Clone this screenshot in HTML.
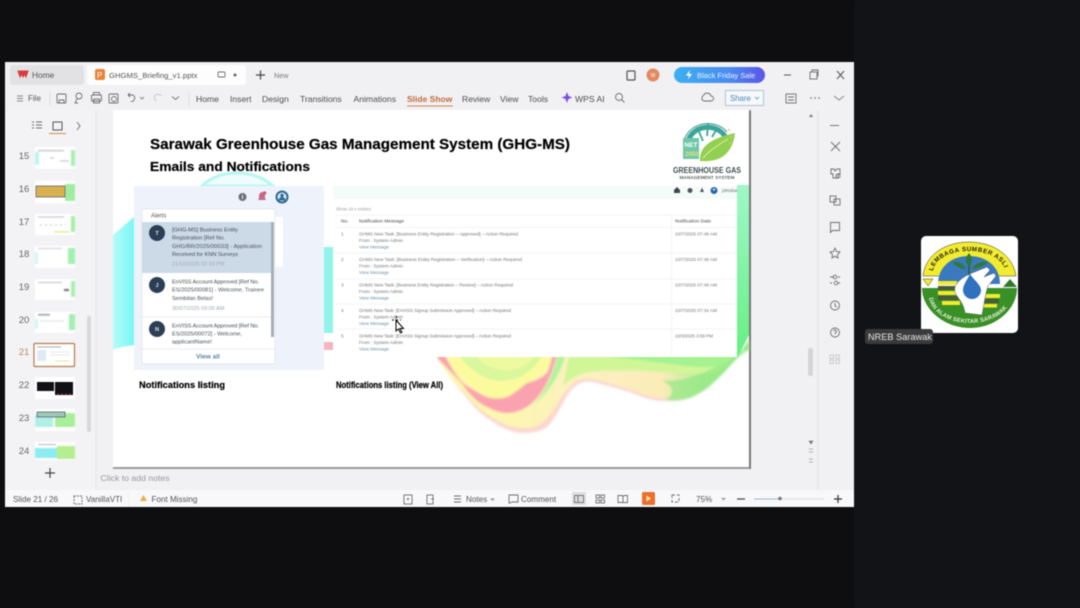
<!DOCTYPE html>
<html><head><meta charset="utf-8"><title>GHGMS Briefing</title>
<style>
html,body{margin:0;padding:0;width:1080px;height:608px;overflow:hidden;background:#0e0e10}
svg{display:block;filter:blur(.45px);font-family:"Liberation Sans",sans-serif}
.m{font-size:8.400px;fill:#555}
.n{font-size:9.500px;fill:#666;text-anchor:middle}
.i{fill:none;stroke:#6d6d6d;stroke-width:.9}
.t{font-size:4.700px;fill:#777}
.l{font-size:4.700px;fill:#6f8fa8}
.a{font-size:5.700px;fill:#4a4f58}
.d{font-size:5.500px;fill:#a5a8ad}
.b{font-weight:bold;fill:#000;stroke:#000;stroke-width:.2}
</style></head><body>
<svg width="1080" height="608" viewBox="0 0 1080 608" xmlns="http://www.w3.org/2000/svg">
<defs>
<linearGradient id="bf" x1="0" x2="1"><stop offset="0" stop-color="#3db0f0"/><stop offset=".6" stop-color="#4a8cf0"/><stop offset="1" stop-color="#5b55e8"/></linearGradient>
<linearGradient id="g1" x1="0" x2="0" y1="0" y2="1"><stop offset="0" stop-color="#a0f7c8"/><stop offset="1" stop-color="#65ef82"/></linearGradient>
<linearGradient id="peach" x1="0" x2="1"><stop offset="0" stop-color="#fbfba6"/><stop offset=".5" stop-color="#fdf0c0"/><stop offset=".72" stop-color="#fbecb8"/><stop offset=".85" stop-color="#b4ec98"/><stop offset="1" stop-color="#82ee84"/></linearGradient>
<linearGradient id="cy" x1="0" x2="1"><stop offset="0" stop-color="#b6fbf8"/><stop offset="1" stop-color="#78f8f5"/></linearGradient>
<filter id="s1" x="-5%" y="-5%" width="110%" height="110%"><feGaussianBlur stdDeviation="1"/></filter>
<filter id="s2" x="-5%" y="-5%" width="110%" height="110%"><feGaussianBlur stdDeviation=".6"/></filter>
</defs>
<rect width="1080" height="608" fill="#0e0e10"/>
<rect x="854" width="226" height="608" fill="#111317"/>
<rect x="5" y="62" width="849" height="445" fill="#f1f1f4"/>
<rect x="10" y="65" width="74" height="20" rx="3" fill="#e2e2e5"/>
<rect x="87" y="65" width="159" height="20" rx="3" fill="#fdfdfd"/>
<path d="M18 71h10l-2 6-1.500-3-1.500 3-1.500-3-1.500 3z" fill="#d93b3b" stroke="#d93b3b"/>
<text x="32" y="78" class="m">Home</text>
<rect x="95" y="69" width="10" height="11" rx="2" fill="#e8843a"/><text x="97" y="78" font-size="8" fill="#fff">P</text>
<text x="109" y="78" font-size="7.700" fill="#555">GHGMS_Briefing_v1.pptx</text>
<rect x="218" y="72" width="7" height="5" rx="1" class="i"/><circle cx="235" cy="75" r="1.500" fill="#666"/>
<path d="M256 75h9M260.500 70.500v9" stroke="#444" stroke-width="1.200"/>
<text x="274" y="78" font-size="7.200" fill="#777">New</text>
<rect x="627" y="71" width="8" height="9" rx="1" fill="none" stroke="#555" stroke-width="1.200"/>
<circle cx="653" cy="75" r="6.500" fill="#e18b5f"/><text x="653" y="77" font-size="5" fill="#fff" text-anchor="middle">W</text>
<rect x="674" y="67" width="91" height="16" rx="8" fill="url(#bf)"/>
<path d="M690 70l-4 5.500h3l-1 4 4-5.500h-3z" fill="#fff"/>
<text x="697" y="78" font-size="7.500" fill="#e9f2ff">Black Friday Sale</text>
<path d="M784 75h7" stroke="#555"/><rect x="810" y="72" width="7" height="7" class="i"/><path d="M812 72v-2h6v6h-1" class="i"/>
<path d="M837 71l7 8M844 71l-7 8" stroke="#555"/>
<!-- toolbar -->
<path d="M17 96h6M17 98.500h6M17 101h6" stroke="#888"/>
<text x="28" y="101" font-size="8" fill="#555">File</text>
<path d="M50 92v14" stroke="#ddd"/>
<rect x="57" y="94" width="9" height="9" rx="1" class="i"/><path d="M59 100h5v3h-5z" class="i"/>
<circle cx="79" cy="96" r="3" class="i"/><path d="M77 99l-2 4h3" class="i"/>
<rect x="91.500" y="95" width="10" height="6" rx="1" class="i"/><rect x="93.500" y="92.500" width="6" height="2.500" class="i"/><rect x="93.500" y="99" width="6" height="4" class="i"/>
<rect x="109" y="94" width="9" height="9" rx="1" class="i"/><circle cx="114" cy="99" r="2.500" class="i"/>
<path d="M128 95h5a3.500 3.500 0 0 1-2 6.500M128 95l2-2M128 95l2 2" class="i"/><path d="M140 97l2 2 2-2" fill="none" stroke="#888"/>
<path d="M161 96a3.500 3.500 0 1 0-4 5" fill="none" stroke="#ccc"/><path d="M172 96.500l3.500 3 3.500-3" fill="none" stroke="#777"/>
<path d="M189 92v14" stroke="#ddd"/>
<g font-size="8.600" fill="#4d4d4d">
<text x="196" y="102">Home</text>
<text x="230" y="102">Insert</text>
<text x="262" y="102">Design</text>
<text x="300" y="102">Transitions</text>
<text x="353.500" y="102">Animations</text>
<text x="407" y="102" font-weight="bold" fill="#c06a3a" font-size="8.500">Slide Show</text>
<text x="462" y="102">Review</text>
<text x="500" y="102">View</text>
<text x="528" y="102">Tools</text>
<text x="575" y="102">WPS AI</text>
</g>
<rect x="407" y="105.500" width="46" height="1" fill="#d4844d"/>
<path d="M567 92l1.500 4 4 1.500-4 1.500-1.500 4-1.500-4-4-1.500 4-1.500z" fill="#7d4fe0"/>
<circle cx="619" cy="97" r="3.500" class="i"/><path d="M621.500 99.500l3 3" class="i"/>
<path d="M704 101h7a2.500 2.500 0 0 0 0-5 4 4 0 0 0-7.500-.5 3 3 0 0 0 .5 5.500z" class="i"/>
<rect x="725.500" y="90.500" width="38" height="15" fill="#f7f8fb" stroke="#a8c4d8"/>
<text x="730" y="101" font-size="7.800" fill="#4a86b8">Share</text><path d="M755 97l2 2 2-2" fill="none" stroke="#4a86b8" stroke-width=".7"/>
<rect x="786" y="94" width="10" height="9" class="i"/><path d="M788 97h6M788 100h6" class="i"/>
<circle cx="811" cy="98" r=".7" fill="#555"/><circle cx="815" cy="98" r=".7" fill="#555"/><circle cx="819" cy="98" r=".7" fill="#555"/>
<path d="M834 96l5 4 5-4" fill="none" stroke="#888"/>
<!-- areas -->
<rect x="5" y="110" width="91" height="380" fill="#f3f3f6"/>
<path d="M96 110v380" stroke="#e5e5e8"/>
<path d="M818 110v380" stroke="#e2e2e6"/>
<rect x="5" y="490" width="849" height="17" fill="#f8f8fb"/>
<!-- thumbs panel -->
<path d="M32 122h2M36 122h6M32 125h2M36 125h6M32 128h2M36 128h6" class="i"/>
<rect x="53" y="122" width="9" height="8" fill="none" stroke="#555"/>
<rect x="49" y="133" width="17" height="1" fill="#d9824c"/>
<path d="M77 122l3 4-3 4" fill="none" stroke="#777"/>
<g class="n"><text x="24" y="159">15</text><text x="24" y="192">16</text><text x="24" y="225">17</text><text x="24" y="257">18</text><text x="24" y="290">19</text><text x="24" y="323">20</text><text x="24" y="355" style="fill:#b8885f">21</text><text x="24" y="388">22</text><text x="24" y="421">23</text><text x="24" y="454">24</text></g>
<g>
<rect x="35" y="147" width="40" height="22" fill="#fff"/><g filter="url(#s2)"><rect x="35" y="152" width="4" height="13" fill="#bdf5f0"/><rect x="71" y="150" width="4" height="16" fill="#a8efb4"/><rect x="38" y="150" width="26" height="1.200" fill="#bbb"/><path d="M50 158h4M60 161h9" stroke="#bbb"/></g>
<rect x="35" y="181" width="40" height="22" fill="#fff"/><rect x="65" y="184" width="10" height="17" fill="#a0eca0" filter="url(#s2)"/><rect x="36" y="186" width="29" height="11" fill="#d8b04e" stroke="#667" stroke-width=".8"/>
<rect x="35" y="214" width="40" height="21" fill="#fff"/><g filter="url(#s2)"><rect x="71" y="216" width="4" height="16" fill="#a4efa4"/><path d="M38 217h26" stroke="#bbb"/><path d="M40 225h26" stroke="#bbb" stroke-dasharray="2 3"/><path d="M54 232h15" stroke="#eeeba8" stroke-width="2"/></g>
<rect x="35" y="246" width="40" height="22" fill="#fff"/><g filter="url(#s2)"><rect x="68" y="248" width="7" height="16" fill="#a0f0b0"/><rect x="35" y="252" width="3" height="12" fill="#d0f7f3"/><rect x="38" y="248" width="24" height="1" fill="#ccc"/></g>
<rect x="35" y="279" width="40" height="21" fill="#fff"/><g filter="url(#s2)"><rect x="71" y="281" width="4" height="16" fill="#a8efb0"/><rect x="64" y="289" width="5" height="2" fill="#667"/><rect x="38" y="282" width="24" height="1" fill="#bbb"/></g>
<rect x="35" y="312" width="40" height="21" fill="#fff"/><g filter="url(#s2)"><rect x="69" y="314" width="6" height="16" fill="#a4eeb0"/><rect x="38" y="314" width="12" height="1.500" fill="#999"/><rect x="35" y="319" width="3" height="10" fill="#d0f7f3"/><path d="M40 321h24" stroke="#ddd"/></g>
<rect x="34" y="343.500" width="40.500" height="23" rx="1" fill="#fff" stroke="#b87a4a" stroke-width="1.200"/><rect x="37" y="350" width="9" height="11" fill="#dfeaf5"/><path d="M37 347h24" stroke="#aaa"/><path d="M50 352h20M50 355h20" stroke="#e8e8e8"/><path d="M55 361h14" stroke="#e8e58a"/>
<rect x="35" y="377" width="40" height="22" fill="#fff"/><rect x="37" y="382" width="17" height="9" fill="#101015"/><rect x="55" y="382" width="18" height="13" fill="#101015"/><path d="M57 394h14" stroke="#a34" stroke-dasharray="2 2"/>
<rect x="35" y="409" width="40" height="22" fill="#fff"/><g filter="url(#s2)"><rect x="35" y="415" width="18" height="12" fill="#b0efe6"/><rect x="55" y="413" width="20" height="14" fill="#a8f098"/></g><rect x="37" y="412" width="28" height="5" fill="#a0c8b4" stroke="#567" stroke-width=".8"/>
<rect x="35" y="442" width="40" height="18" fill="#fff"/><g filter="url(#s2)"><rect x="35" y="448" width="22" height="10" fill="#8decef"/><rect x="57" y="446" width="18" height="13" fill="#b4ee90"/></g><rect x="38" y="444" width="18" height="1" fill="#bbb"/>
</g>
<rect x="87" y="316" width="4" height="116" rx="2" fill="#d8d8db"/>
<path d="M45 473h10M50 468v10" stroke="#444" stroke-width="1.200"/>
<!-- slide -->
<rect x="113" y="110" width="638" height="359" fill="#9a9a9a"/>
<rect x="749" y="111" width="2" height="358" fill="#777"/>
<rect x="113" y="110" width="636" height="357" fill="#fff"/>
<path d="M113 235L134 217V345L122 347Q116 348 113 350Z" fill="url(#cy)"/>
<path d="M202 186C212 176 225 173 237 173S262 176 273 186Z" fill="#eefcfb" stroke="#b5f7f2" stroke-width="3"/>
<!-- wave -->
<g filter="url(#s1)">
<path d="M437 358C447 372 455 385 463 393 472 405 480 414 490 420 502 428 512 433 523 433 534 433 542 431 547 427 554 420 558 412 563 403 568 394 572 388 577 385 584 381 590 381 597 383L630 392C642 397 652 401 663 401 673 401 682 401 690 398 698 394 706 390 713 383 722 375 730 366 737 358L749 340V350H437Z" fill="#fbd8d0"/>
<path d="M437 358C447 372 455 385 463 391 472 402 480 410 490 416 502 424 512 428 523 428 534 428 541 425 545 420 552 414 556 406 561 398 566 390 571 384 577 381 584 378 590 378 597 380L630 389C642 394 652 398 663 398 673 398 682 400 690 397 698 394 706 390 713 383 722 375 730 366 737 358L749 340V350H437Z" fill="url(#peach)"/>
<path d="M445 350C455 372 470 385 487 397 495 402 502 400 507 397 518 390 527 384 535 378 545 372 552 365 556 350Z" fill="#fbfb9e"/>
<path d="M455 350C470 372 485 380 500 381 518 381 535 372 545 350Z" fill="#d9f79c"/>
<path d="M470 350C485 368 500 372 512 370 525 367 532 362 536 350Z" fill="#eefaa0"/>
<path d="M437 358C447 368 455 376 463 385 470 396 480 404 487 407 495 411 501 413 507 413 515 413 522 410 527 407 534 402 539 396 543 390 550 378 554 368 558 350L553 350C551 364 549 369 547 373 542 378 535 381 527 383 520 388 514 394 507 397 500 399 493 399 487 397 478 393 470 388 463 383 456 375 450 367 443 350Z" fill="#fba2b0"/>
<path d="M558 350L567 350C563 366 558 375 553 383 547 392 540 400 533 405 540 398 545 389 549 381 553 372 556 364 558 350Z" fill="#aef59c"/>
<path d="M570 350H737C728 366 720 373 712 373 696 376 680 372 660 372 640 370 610 370 590 372 580 374 570 378 563 386 565 376 567 366 570 350Z" fill="#d0f698"/>
<path d="M590 350H737C730 363 722 367 712 367 690 368 660 362 640 360 620 358 605 358 590 350Z" fill="#a4f290"/>
<path d="M660 380C680 383 700 375 715 367L737 357L749 340V350L737 358C730 366 722 375 713 383 705 391 697 395 690 398 680 401 672 401 665 400 675 395 675 385 660 380Z" fill="#93e885" opacity=".7"/>
</g>
<path d="M737 185H749V335L737 358Z" fill="url(#g1)"/>
<rect x="324" y="247" width="9" height="86" fill="#92f3ea"/>
<rect x="324" y="342" width="9" height="8" fill="#f5b5c0"/>
<!-- titles -->
<text x="150" y="149" font-size="14.600" class="b" textLength="420" lengthAdjust="spacingAndGlyphs">Sarawak Greenhouse Gas Management System (GHG-MS)</text>
<text x="150" y="171" font-size="13" class="b" textLength="160" lengthAdjust="spacingAndGlyphs">Emails and Notifications</text>
<!-- logo -->
<path d="M688 142a20 18 0 0 1 38-4" fill="none" stroke="#3aa59a" stroke-width="5"/>
<path d="M684 142a24 21 0 0 1 43-10" fill="none" stroke="#2f8f8a" stroke-width="1"/>
<path d="M697 127l6 14M708 124l-1 12M718 127l-6 10" stroke="#3aa59a" stroke-width="1.800"/>
<rect x="683" y="138" width="16" height="21" fill="#6fc7a8"/>
<text x="684.500" y="147" font-size="6.500" font-weight="bold" fill="#fff">NET</text>
<text x="685" y="156" font-size="6" font-weight="bold" fill="#e8e57a">2050</text>
<path d="M700 161C699 146 712 138 735 133 733 150 724 163 700 161Z" fill="#93cf50"/>
<path d="M703 158C710 150 718 145 728 139" stroke="#dff0a8" fill="none"/>
<g fill="#c9c7a0"><circle cx="729" cy="130" r="1"/><circle cx="731" cy="137" r="1"/><circle cx="730" cy="143" r="1"/></g>
<text x="707" y="173" font-size="8" font-weight="bold" fill="#3d4f50" text-anchor="middle" textLength="68" lengthAdjust="spacingAndGlyphs">GREENHOUSE GAS</text>
<text x="707" y="179" font-size="4.800" font-weight="bold" fill="#5a6666" text-anchor="middle" textLength="55" lengthAdjust="spacingAndGlyphs">MANAGEMENT SYSTEM</text>
<!-- left screenshot -->
<rect x="134" y="186" width="190" height="184" fill="#eef3fb"/>
<circle cx="242.500" cy="197" r="4" fill="#6b7079"/><rect x="242" y="195" width="1" height="4" fill="#eef3fb"/>
<path d="M262 192c-3 1-3 3-3 6l-1 2h8l-1-2c0-3 0-5-3-6z" fill="#c46a8a"/><circle cx="264.500" cy="193" r="1.800" fill="#d45a6a"/>
<circle cx="282" cy="197" r="6.500" fill="#2d6a94"/><circle cx="282" cy="197" r="4.500" fill="#dfe8f2"/><circle cx="282" cy="195.500" r="1.700" fill="#2d6a94"/><path d="M278.500 200.500a3.500 3.500 0 0 1 7 0" fill="#2d6a94"/>
<rect x="142" y="217" width="141" height="50" fill="#fff"/>
<rect x="142" y="209" width="133" height="155" rx="2" fill="#fff" stroke="#dde2e8" stroke-width=".7"/>
<text x="151" y="217.500" font-size="6" fill="#555">Alerts</text>
<rect x="142" y="222" width="130" height="51" fill="#ccdae8"/>
<path d="M142 317h133M142 349h133" stroke="#e3e6ea" stroke-width=".7"/>
<rect x="271" y="222" width="3" height="115" fill="#a6afb8"/>
<g fill="#2c3e55"><circle cx="157" cy="233" r="8"/><circle cx="157" cy="285" r="8"/><circle cx="157" cy="329" r="8"/></g>
<g font-size="5.500" font-weight="bold" fill="#dfe5ee" text-anchor="middle"><text x="157" y="235">T</text><text x="157" y="287">J</text><text x="157" y="331">N</text></g>
<g class="a">
<text x="172" y="231.500" textLength="66">[GHG-MS] Business Entity</text>
<text x="172" y="239.500" textLength="53">Registration [Ref No.</text>
<text x="172" y="248" textLength="90">GHG/BR/2025/00033] - Application</text>
<text x="172" y="256" textLength="66">Received for KNN Surveys</text>
<text x="172" y="283.500" textLength="87">EnVISS Account Approved [Ref No.</text>
<text x="172" y="291.500" textLength="92">ES/2025/00081] - Welcome, Trainee</text>
<text x="172" y="300" textLength="41">Sembilan Belas!</text>
<text x="172" y="327.500" textLength="87">EnVISS Account Approved [Ref No.</text>
<text x="172" y="335.500" textLength="70">ES/2025/00072] - Welcome,</text>
<text x="172" y="343.500" textLength="40">applicantName!</text>
</g>
<g class="d"><text x="172" y="265.500">21/10/2025 02:19 PM</text><text x="172" y="310">30/07/2025 09:09 AM</text></g>
<text x="208" y="358.500" font-size="6.500" font-weight="bold" fill="#5a87a8" text-anchor="middle">View all</text>
<text x="139" y="388" font-size="9" class="b" textLength="86" lengthAdjust="spacingAndGlyphs">Notifications listing</text>
<!-- right screenshot -->
<rect x="333" y="186" width="404" height="171" fill="#fff"/>
<rect x="333" y="186" width="404" height="13" fill="#f5fbf9"/>
<path d="M674 190l3-3 3 3v3h-6z" fill="#3d4550"/><circle cx="690" cy="190.500" r="2.500" fill="#4f5660"/><path d="M702 187.500l2 4.500h-4z" fill="#4f5660"/>
<circle cx="714" cy="190.500" r="3.500" fill="#2767a8"/><circle cx="714" cy="189.500" r="1.200" fill="#cde"/>
<text x="722" y="192" font-size="4.400" fill="#666">johndoe</text>
<text x="336" y="210.500" font-size="4.400" fill="#999">Show  10  v  entries</text>
<path d="M336 215h401M336 227.500h401M336 253h401M336 279h401M336 304h401M336 329h401" stroke="#eef0f2" stroke-width=".7"/>
<path d="M671.500 215v140" stroke="#eef0f2" stroke-width=".7"/>
<g font-size="4.800" fill="#444"><text x="341" y="222.500">No.</text><text x="359" y="222.500" textLength="45">Notification Message</text><text x="675" y="222.500" textLength="36">Notification Date</text></g>
<g class="t">
<text x="341" y="235.500">1</text><text x="341" y="261">2</text><text x="341" y="286.500">3</text><text x="341" y="312">4</text><text x="341" y="337.500">5</text>
<text x="359" y="235.500" textLength="159">GHMS New Task: [Business Entity Registration – Approved] – Action Required</text>
<text x="359" y="242" textLength="44">From : System Admin</text>
<text x="359" y="261" textLength="163">GHMS New Task: [Business Entity Registration – Verification] – Action Required</text>
<text x="359" y="267.500" textLength="44">From : System Admin</text>
<text x="359" y="286.500" textLength="154">GHMS New Task: [Business Entity Registration – Review] – Action Required</text>
<text x="359" y="293" textLength="44">From : System Admin</text>
<text x="359" y="312" textLength="152">GHMS New Task: [EnVISS Signup Submission Approved] – Action Required</text>
<text x="359" y="318.500" textLength="44">From : System Admin</text>
<text x="359" y="337.500" textLength="152">GHMS New Task: [EnVISS Signup Submission Approved] – Action Required</text>
<text x="359" y="344" textLength="44">From : System Admin</text>
<text x="675" y="235.500" textLength="42">10/7/2025 07:49 AM</text>
<text x="675" y="261" textLength="42">10/7/2025 07:49 AM</text>
<text x="675" y="286.500" textLength="42">10/7/2025 07:49 AM</text>
<text x="675" y="312" textLength="42">10/7/2025 07:34 AM</text>
<text x="675" y="337.500" textLength="38">10/3/2025 3:59 PM</text>
</g>
<g class="l"><text x="359" y="248.500" textLength="30">View Message</text><text x="359" y="274" textLength="30">View Message</text><text x="359" y="299.500" textLength="30">View Message</text><text x="359" y="325" textLength="30">View Message</text><text x="359" y="350.500" textLength="30">View Message</text></g>
<path d="M396 320v11l2.500-2 2 4 1.500-.8-2-3.700h3.500z" fill="#fff" stroke="#000" stroke-width="1"/>
<path d="M392 320h9M396.500 316v8" stroke="#000" stroke-width="1" stroke-dasharray="2 2"/>
<text x="336" y="388" font-size="8.900" class="b" textLength="107" lengthAdjust="spacingAndGlyphs">Notifications listing (View All)</text>
<!-- scroll right of slide -->
<path d="M811 114l-2 3h4z" fill="#777"/>
<rect x="808" y="348" width="5" height="28" rx="2" fill="#d5d5d8"/>
<path d="M809 441h4l-2 3zM809 449h4M809 452h4M809 459h4M809 462h4" fill="#777" stroke="#777" stroke-width=".6"/>
<!-- right sidebar -->
<path d="M830 125.500h9" stroke="#777"/>
<g class="i">
<path d="M831 142l9 9M840 142l-9 9"/>
<path d="M831 169h3l1 2 2-2h3v5h-2v4h-5v-4h-2z"/><circle cx="838" cy="176" r="2"/>
<rect x="830" y="196" width="6" height="6"/><rect x="834" y="199" width="6" height="6"/>
<path d="M830.500 222.500h9v8h-7l-2 2z"/>
<path d="M835 248l1.500 3.500 3.500.5-2.500 2.500.5 3.500-3-1.800-3 1.800.5-3.500-2.500-2.500 3.500-.5z"/>
<path d="M830 277h4M838 277h2M830 283h2M838 283h2"/><circle cx="835" cy="277" r="1.800"/><circle cx="836" cy="283" r="1.800"/>
<circle cx="835" cy="305.500" r="4.500"/><path d="M835 303v3l2 1"/>
<circle cx="835" cy="332.500" r="4.500"/><path d="M833.500 331a1.500 1.500 0 1 1 1.500 2v1"/>
</g>
<g fill="none" stroke="#ccc"><rect x="830" y="355" width="3.500" height="3.500"/><rect x="836" y="355" width="3.500" height="3.500"/><rect x="830" y="360" width="3.500" height="3.500"/><rect x="836" y="360" width="3.500" height="3.500"/></g>
<!-- notes -->
<text x="100.500" y="481" font-size="8.700" fill="#999">Click to add notes</text>
<!-- status -->
<g font-size="8.100" fill="#555">
<text x="13" y="502">Slide 21 / 26</text>
<text x="86" y="502">VanillaVTI</text>
<text x="151.500" y="502">Font Missing</text>
<text x="466" y="502">Notes</text>
<text x="521" y="502">Comment</text>
<text x="696" y="502">75%</text>
</g>
<path d="M74 496h8v8h-8z" class="i" stroke-dasharray="2 1"/>
<path d="M129 493v14" stroke="#eee"/>
<path d="M143.500 495l3.500 6h-7z" fill="#e8b04a"/>
<rect x="404" y="495" width="8" height="9" class="i"/><circle cx="408" cy="499" r="1" fill="#666"/>
<rect x="427" y="495" width="6" height="9" class="i"/><path d="M431 499h3" class="i"/>
<path d="M454 496h7M454 499h7M454 502h7" class="i"/><path d="M491 498.500l1.500 1.500 1.500-1.500" fill="none" stroke="#777"/>
<path d="M509 495h9v7h-6l-2 1h-1z" class="i"/>
<rect x="572" y="492" width="14" height="13" fill="#dfdfe2"/>
<rect x="574.500" y="495.500" width="9" height="7" class="i"/><path d="M578 495.500v7" class="i"/>
<rect x="596" y="495" width="3.500" height="3" class="i"/><rect x="601" y="495" width="3.500" height="3" class="i"/><rect x="596" y="500" width="3.500" height="3" class="i"/><rect x="601" y="500" width="3.500" height="3" class="i"/>
<path d="M618 495.500h4l1 1 1-1h3.500v7h-9.500zM623 496.500v6" class="i"/>
<rect x="642" y="492" width="13" height="13" rx="1.500" fill="#e8712d"/><path d="M646.500 495.500l4.500 3-4.500 3z" fill="#ffe9a0"/>
<rect x="672" y="495" width="7" height="7" class="i" stroke-dasharray="3 2"/>
<path d="M722 498l1.500 1.500 1.500-1.500" fill="none" stroke="#777"/>
<path d="M737 499h8" stroke="#444" stroke-width="1.200"/>
<path d="M754 499h70" stroke="#ddd"/><path d="M754 499h26" stroke="#9db6cf"/><circle cx="780" cy="498.500" r="1.800" fill="#777"/>
<path d="M834 499h8M838 495v8" stroke="#333" stroke-width="1.200"/>
<!-- NREB tile -->
<rect x="921" y="236" width="97" height="97" rx="5" fill="#fff"/>
<path d="M923 276C925 255 945 242 969 242S1013 255 1016 276H1000L999 276H938Z" fill="#f2ec2e" stroke="#333" stroke-width=".5"/>
<path d="M938 284C938 268 950 256 969 256S1000 268 1000 284Z" fill="#3a79bd"/>
<path d="M922 288H1017C1017 309 996 328 970 328S922 309 922 288Z" fill="#399027"/>
<path d="M923 279H933L928 286Z" fill="#f2ec2e" stroke="#333" stroke-width=".5"/>
<path d="M1017 287H1003L1010 279Z" fill="#2f7a2a"/>
<g fill="#f2ec2e"><rect x="938" y="281" width="19" height="4"/><rect x="938" y="291" width="20" height="4"/><rect x="942" y="301" width="18" height="4"/><rect x="982" y="294" width="18" height="4"/><rect x="980" y="304" width="17" height="3.500"/></g>
<g fill="#4a5a3a"><rect x="938" y="286" width="19" height="4"/><rect x="938" y="296" width="20" height="4"/><rect x="982" y="299" width="17" height="4"/></g>
<path d="M955 287C958 280 965 276 972 273L987 267 990 270 984 277 994 273 996 276 988 286C985 295 984 305 982 315L965 313C964 306 961 301 957 296 955 293 954 290 955 287Z" fill="#fff" stroke="#555" stroke-width=".5"/>
<path d="M970 274C967 280 963 285 963 290A9 9 0 0 0 981 290C981 285 974 280 970 274Z" fill="#2f71bf"/>
<path d="M969 275V264" stroke="#2a5d2a" stroke-width="1.500"/>
<path d="M969 266C965 263 965 258 969 253 973 258 973 263 969 266ZM966 269C961 269 955 266 952 262 958 261 963 263 966 269ZM972 269C977 269 984 266 988 262 982 261 975 263 972 269Z" fill="#2e7a35"/>
<path id="arcT" d="M933 272A36 21 0 0 1 1005 272" fill="none"/>
<path id="arcB" d="M929 296A41 27 0 0 0 1011 296" fill="none"/>
<text font-size="6.300" font-weight="bold" fill="#222" letter-spacing=".5"><textPath href="#arcT" startOffset="1">LEMBAGA SUMBER ASLI</textPath></text>
<text font-size="5.800" font-weight="bold" fill="#e8f0d8" letter-spacing=".2"><textPath href="#arcB" startOffset="2">DAN ALAM SEKITAR SARAWAK</textPath></text>
<rect x="865" y="329" width="68" height="15" rx="3" fill="#3a3a3c"/>
<text x="868" y="340" font-size="9.200" fill="#e8e8e8">NREB Sarawak</text>
</svg>
</body></html>
